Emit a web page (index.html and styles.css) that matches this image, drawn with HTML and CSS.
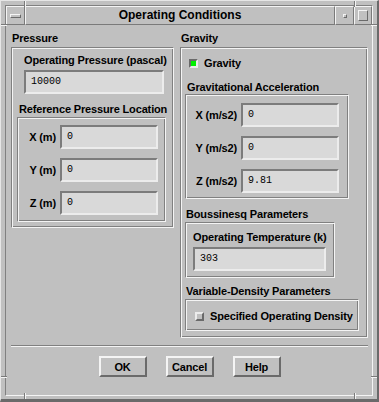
FILE: index.html
```html
<!DOCTYPE html>
<html lang="en">

<head>
    <meta charset="UTF-8">
    <title>Operating Conditions</title>
    <link rel="stylesheet" href="styles.css">
</head>

<body>

    <div class="window">
        <span class="notch notch-v" style="left: 23px; top: 0;"></span>
        <span class="notch notch-v" style="left: 353px; top: 0;"></span>
        <span class="notch notch-v" style="left: 23px; bottom: 0;"></span>
        <span class="notch notch-v" style="left: 353px; bottom: 0;"></span>
        <span class="notch notch-h" style="top: 23px; left: 0;"></span>
        <span class="notch notch-h" style="top: 23px; right: 0;"></span>
        <span class="notch notch-h" style="top: 375px; left: 0;"></span>
        <span class="notch notch-h" style="top: 375px; right: 0;"></span>

        <div class="inner">
            <div class="titlebar">
                <div class="tbButton tbMenu"><span class="menuBar"></span></div>
                <div class="tbTitle">Operating Conditions</div>
                <div class="tbButton tbMin"><span class="minBox"></span></div>
                <div class="tbButton tbMax"><span class="maxBox"></span></div>
            </div>

            <div class="dialog">
                <div class="columns">

                    <div class="col">
                        <div class="secLabel">Pressure</div>
                        <div class="frame pressureFrame">
                            <div class="fieldLabel">Operating Pressure (pascal)</div>
                            <div class="input pressureInput">10000</div>
                            <div class="subLabel">Reference Pressure Location</div>
                            <div class="frame coordFrame">
                                <span class="rowLabel">X (m)</span>
                                <div class="input">0</div>
                                <span class="rowLabel">Y (m)</span>
                                <div class="input">0</div>
                                <span class="rowLabel">Z (m)</span>
                                <div class="input">0</div>
                            </div>
                        </div>
                    </div>

                    <div class="col">
                        <div class="secLabel">Gravity</div>
                        <div class="frame gravityFrame">
                            <div class="checkRow gravityRow">
                                <span class="checkbox checked"></span>
                                <span>Gravity</span>
                            </div>
                            <div class="subLabel accelLabel">Gravitational Acceleration</div>
                            <div class="frame coordFrame accelFrame">
                                <span class="rowLabel">X (m/s2)</span>
                                <div class="input">0</div>
                                <span class="rowLabel">Y (m/s2)</span>
                                <div class="input">0</div>
                                <span class="rowLabel">Z (m/s2)</span>
                                <div class="input">9.81</div>
                            </div>
                            <div class="subLabel boussLabel">Boussinesq Parameters</div>
                            <div class="frame tempFrame">
                                <div class="fieldLabel">Operating Temperature (k)</div>
                                <div class="input tempInput">303</div>
                            </div>
                            <div class="subLabel densLabel">Variable-Density Parameters</div>
                            <div class="frame densFrame">
                                <div class="checkRow">
                                    <span class="checkbox"></span>
                                    <span>Specified Operating Density</span>
                                </div>
                            </div>
                        </div>
                    </div>

                </div>

                <div class="separator"></div>

                <div class="buttons">
                    <button class="btn">OK</button>
                    <button class="btn">Cancel</button>
                    <button class="btn">Help</button>
                </div>
            </div>
        </div>
    </div>

</body>

</html>
```

FILE: styles.css
```css
html,
body {
    margin: 0;
    padding: 0;
}

body {
    font-family: "Liberation Sans", Arial, sans-serif;
    font-size: 11px;
    font-weight: bold;
    letter-spacing: -0.15px;
    line-height: 13px;
    white-space: nowrap;
    color: #000;
    background-color: #c0c0c0;
}

.window {
    position: relative;
    width: 379px;
    height: 402px;
    box-sizing: border-box;
    background-color: #c0c0c0;
    border-style: solid;
    border-width: 1px 2px 3px 1px;
    border-color: #e6e6e6 #6a6a6a #6a6a6a #e6e6e6;
    padding: 4px 4px 3px 4px;
}

.notch {
    position: absolute;
    box-sizing: border-box;
}

.notch-v {
    width: 2px;
    height: 6px;
    border-left: 1px solid #7a7a7a;
    border-right: 1px solid #f4f4f4;
}

.notch-h {
    width: 6px;
    height: 2px;
    border-top: 1px solid #7a7a7a;
    border-bottom: 1px solid #f4f4f4;
}

.inner {
    height: 100%;
    box-sizing: border-box;
    border: 1px solid;
    border-color: #808080 #f4f4f4 #f4f4f4 #808080;
    display: flex;
    flex-direction: column;
}

/* title bar */

.titlebar {
    display: flex;
    height: 19px;
}

.titlebar > div {
    box-sizing: border-box;
    border: 1px solid;
    border-color: #f4f4f4 #7a7a7a #7a7a7a #f4f4f4;
    display: flex;
    align-items: center;
    justify-content: center;
}

.tbMenu {
    width: 19px;
}

.tbTitle {
    flex: 1;
    font-size: 12px;
    letter-spacing: 0;
}

.tbMin {
    width: 19px;
}

.tbMax {
    width: 18px;
}

.menuBar {
    width: 11px;
    height: 4px;
    box-sizing: border-box;
    border: 1px solid;
    border-color: #f4f4f4 #6a6a6a #6a6a6a #f4f4f4;
}

.minBox {
    width: 4px;
    height: 4px;
    box-sizing: border-box;
    border: 1px solid;
    border-color: #f4f4f4 #6a6a6a #6a6a6a #f4f4f4;
}

.maxBox {
    width: 10px;
    height: 11px;
    box-sizing: border-box;
    border: 1px solid;
    border-color: #f4f4f4 #6a6a6a #6a6a6a #f4f4f4;
}

/* dialog body */

.dialog {
    flex: 1;
    padding: 7px 4px 0 5px;
}

.columns {
    display: grid;
    grid-template-columns: 163px 188px;
    column-gap: 6px;
    align-items: start;
}

.secLabel {
    padding-left: 1px;
    margin-bottom: 2px;
}

.frame {
    box-sizing: border-box;
    border: 1px solid;
    border-color: #808080 #f4f4f4 #f4f4f4 #808080;
    box-shadow: inset 1px 1px #f4f4f4, inset -1px -1px #808080;
}

.input {
    box-sizing: border-box;
    height: 24px;
    padding: 0 5px;
    border: 2px solid;
    border-color: #7c7c7c #ececec #ececec #7c7c7c;
    background-color: #d9d9d9;
    color: #000;
    font-family: "Liberation Mono", "Courier New", monospace;
    font-size: 10px;
    font-weight: normal;
    letter-spacing: 0;
    line-height: 20px;
}

/* pressure column */

.pressureFrame {
    padding: 6px 5px 5px 5px;
}

.pressureFrame > .fieldLabel {
    margin-left: 7px;
}

.pressureInput {
    width: 140px;
    margin: 3px 0 0 7px;
}

.subLabel {
    margin: 9px 0 1px 2px;
}

.coordFrame {
    width: 149px;
    padding: 7px 5px 6px 2px;
    display: grid;
    grid-template-columns: 36px 98px;
    gap: 9px 4px;
    align-items: center;
}

.rowLabel {
    justify-self: end;
}

/* gravity column */

.gravityFrame {
    padding: 9px 7px 6px 4px;
}

.checkRow {
    display: flex;
    align-items: center;
    gap: 6px;
}

.gravityRow {
    margin-left: 4px;
}

.checkbox {
    flex-shrink: 0;
    width: 9px;
    height: 9px;
    box-sizing: border-box;
    border: 2px solid;
    border-color: #ececec #6a6a6a #6a6a6a #ececec;
    background-color: #c0c0c0;
}

.checkbox.checked {
    border-color: #6a6a6a #ececec #ececec #6a6a6a;
    background-color: #00f000;
}

.accelLabel {
    margin: 11px 0 0 2px;
}

.accelFrame {
    width: 164px;
    padding: 8px 7px 5px 7px;
    grid-template-columns: 44px 98px;
}

.boussLabel {
    margin: 9px 0 1px 1px;
}

.tempFrame {
    width: 150px;
    padding: 8px 6px 6px 7px;
}

.tempInput {
    width: 133px;
    margin-top: 3px;
}

.densLabel {
    margin: 7px 0 1px 1px;
}

.densFrame {
    width: 174px;
    padding: 10px 7px 7px 9px;
}

/* bottom */

.separator {
    margin-top: 7px;
    height: 0;
    border-top: 1px solid #808080;
    border-bottom: 1px solid #f4f4f4;
}

.buttons {
    display: flex;
    justify-content: center;
    gap: 19px;
    margin-top: 9px;
}

.btn {
    width: 48px;
    height: 21px;
    padding: 0;
    box-sizing: border-box;
    border: 2px solid;
    border-color: #f4f4f4 #6a6a6a #6a6a6a #f4f4f4;
    background-color: #c0c0c0;
    font-family: inherit;
    font-size: 11px;
    font-weight: bold;
    letter-spacing: -0.15px;
    color: #000;
}
```
